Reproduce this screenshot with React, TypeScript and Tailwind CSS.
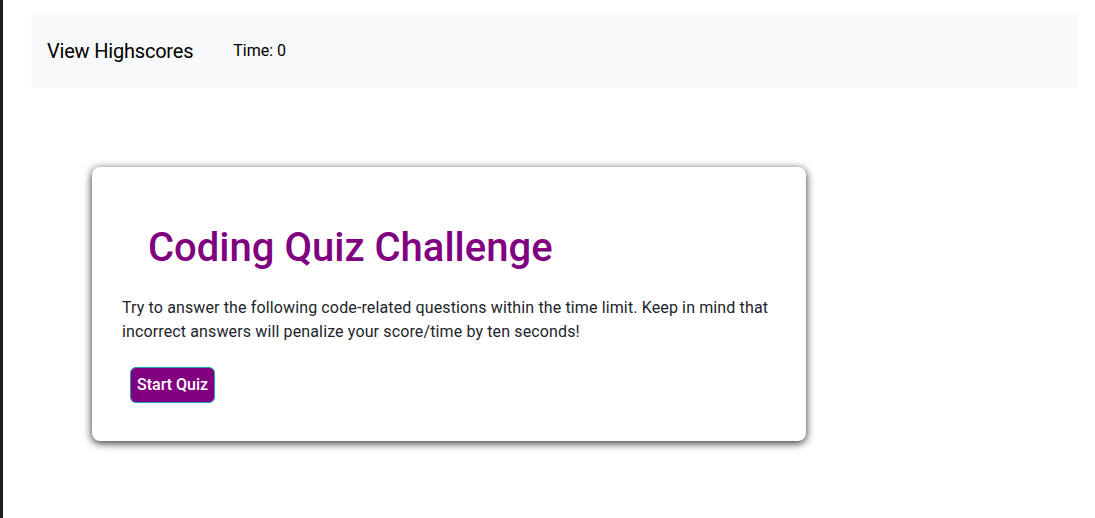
export default function App() {
  return (
    <div className="flex min-h-[518px] bg-white font-['Roboto','Liberation_Sans',Arial,sans-serif] text-[#212529]">
      <div className="w-[3px] shrink-0 bg-[#1e1e1e]" />
      <div className="flex-1 pl-[28px] pr-[17px] pt-[15px]">
        <nav className="flex h-[72px] items-center bg-[#f8f9fa] px-4">
          <a className="text-[20px] tracking-[-0.2px] text-black">View Highscores</a>
          <span className="ml-[40px] text-[16px] text-black">Time: 0</span>
        </nav>
        <div className="ml-[61px] mt-[80px] h-[274px] w-[714px] rounded-lg bg-white px-[30px] pt-[57px] shadow-[0_2px_9px_rgba(0,0,0,0.85)]">
          <h1 className="ml-[26px] text-[40px] font-medium leading-[48px] text-[#800080]">Coding Quiz Challenge</h1>
          <p className="mt-[24px] text-[16px] leading-[24px] tracking-[0.13px]">
            Try to answer the following code-related questions within the time limit. Keep in mind that incorrect answers will penalize your score/time by ten seconds!
          </p>
          <button className="ml-[8px] mt-[23px] h-[36px] rounded-md border border-[#1ba1b5] bg-[#800080] px-[6px] text-[16px] font-medium text-white">
            Start Quiz
          </button>
        </div>
      </div>
    </div>
  )
}
